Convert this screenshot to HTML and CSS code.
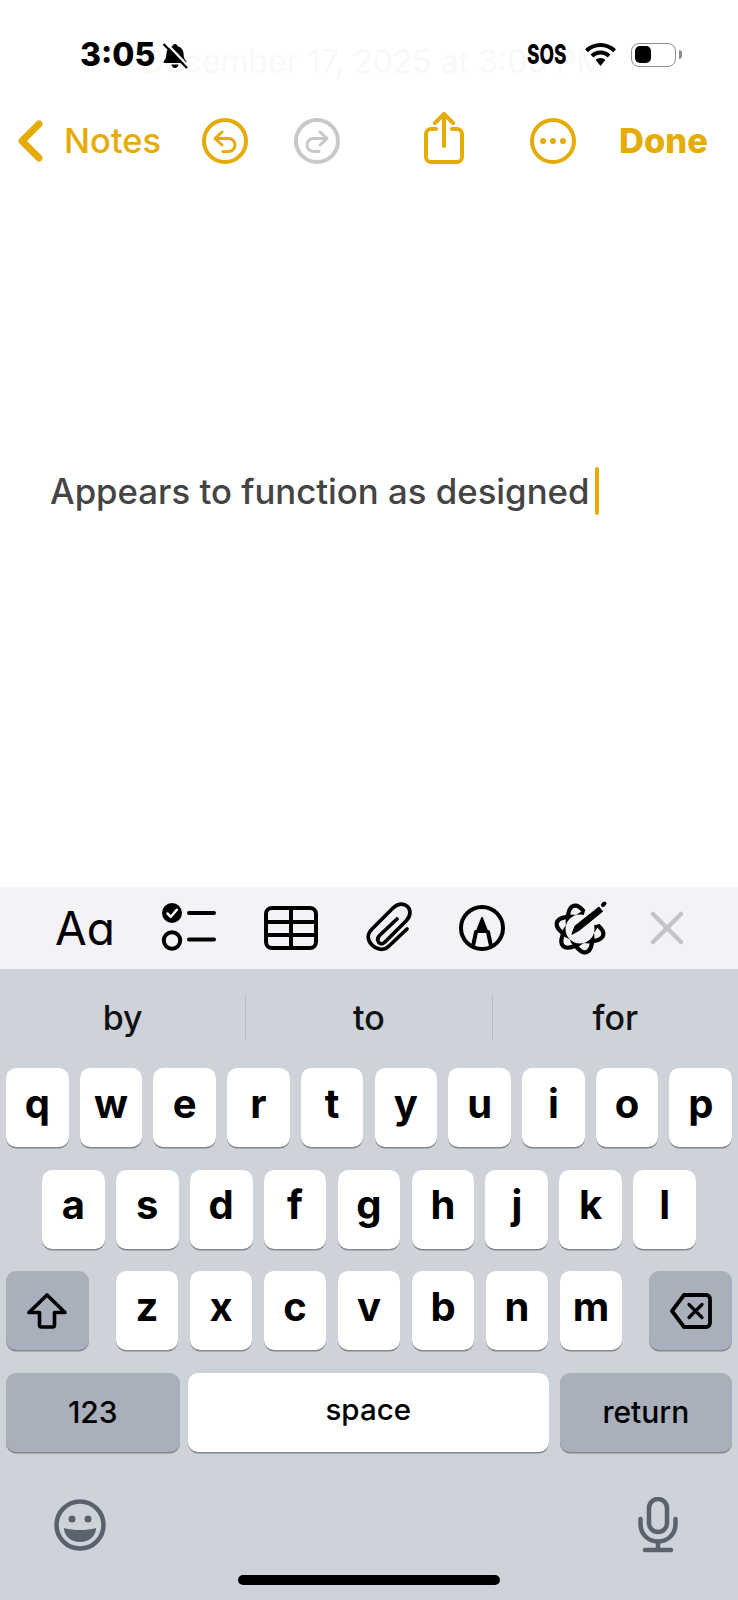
FILE: index.html
```html
<!DOCTYPE html>
<html lang="en">
<head>
<meta charset="utf-8">
<title>Notes</title>
<link rel="stylesheet" href="styles.css">
</head>
<body>
<div class="app">
  <div class="ghost">December 17, 2025 at 3:05 PM</div>
  <header class="status">
    <span class="time">3:05</span>
    <svg class="bell" viewBox="0 0 26 26"><path d="M13 1c1.500 0 2.500 1 2.600 2.200 3.800.9 6 4.100 6 7.900 0 3.600 1 5.300 2.600 6.900.7.700.2 1.900-.8 1.900H2.600c-1 0-1.500-1.200-.8-1.900C3.400 16.400 4.400 14.700 4.400 11.100c0-3.800 2.200-7 6-7.900C10.500 2 11.500 1 13 1zM9.500 21.500h7c-.2 2-1.700 3.500-3.500 3.500s-3.300-1.500-3.500-3.500z"/><path class="bell-gap" d="M4.500 0.500L27 24"/><path class="bell-slash" d="M1.500 1l23.500 24"/></svg>
    <span class="sos"><span class="sos-text">SOS</span></span>
    <svg class="wifi" viewBox="0 0 31 23"><path d="M15.500 0C9.500 0 4.200 2.300 0 6.200l2.800 3C6.200 6 10.600 4.100 15.500 4.100S24.800 6 28.200 9.200l2.800-3C26.800 2.300 21.500 0 15.500 0zM15.500 7.500c-3.900 0-7.300 1.500-10 4l2.900 3c1.900-1.800 4.400-2.900 7.100-2.900s5.200 1.100 7.100 2.900l2.900-3c-2.700-2.500-6.100-4-10-4zM15.500 15c-1.900 0-3.500.7-4.800 1.900l4.800 6 4.800-6c-1.300-1.200-2.900-1.900-4.800-1.900z"/></svg>
    <span class="battery"><span class="battery-level"></span></span>
    <span class="battery-nub"></span>
  </header>

  <nav class="nav">
    <svg class="chevron" viewBox="0 0 25 42"><path d="M21 4L4 21l17 17"/></svg>
    <span class="back">Notes</span>
    <svg class="round undo" viewBox="0 0 46 46"><circle cx="23" cy="23" r="21"/><path class="arrow" d="M20 14l-7 6.500 7 6.500M13 20.500h13.500a6.500 6.500 0 0 1 0 13H21"/></svg>
    <svg class="round redo" viewBox="0 0 46 46"><circle cx="23" cy="23" r="21"/><path class="arrow" d="M26 14l7 6.500-7 6.500M33 20.500H19.500a6.500 6.500 0 0 0 0 13H25"/></svg>
    <svg class="share" viewBox="0 0 40 52"><path d="M12 17H7a5 5 0 0 0-5 5v23a5 5 0 0 0 5 5h26a5 5 0 0 0 5-5V22a5 5 0 0 0-5-5h-5M20 34V3M11 11l9-9 9 9"/></svg>
    <svg class="round more" viewBox="0 0 46 46"><circle cx="23" cy="23" r="21"/><circle class="dot" cx="13" cy="23" r="3"/><circle class="dot" cx="23" cy="23" r="3"/><circle class="dot" cx="33" cy="23" r="3"/></svg>
    <span class="done">Done</span>
  </nav>

  <main class="note">
    <span class="note-text">Appears to function as designed</span><span class="caret"></span>
  </main>

  <div class="toolbar">
    <span class="aa">Aa</span>
    <svg class="tool checklist" viewBox="0 0 54 46"><circle class="solid" cx="11" cy="8" r="9"/><path class="tick" d="M6.500 8.500l3.300 3.300 6-7"/><circle cx="11" cy="35.500" r="8.200"/><path d="M28 8h25M28 34.500h25"/></svg>
    <svg class="tool table" viewBox="0 0 54 44"><rect x="2" y="2" width="50" height="40" rx="6"/><path d="M2 16h50M2 29h50M27 2v40"/></svg>
    <svg class="tool clip" viewBox="0 0 65 65"><path d="M52 33L34 50C29 55 22 54 17 49C12 44 12 38 17 33L38 12C43 7 49 7 52.500 10.500C56 14 56 20 51 25L30 46C27 49 24 48 23 45C22 43 23 41 25 39L42 23"/></svg>
    <svg class="tool markup" viewBox="0 0 46 46"><circle cx="23" cy="23" r="21"/><path class="solid" d="M23 13l5.500 14h-11z"/><path d="M17 27l-3 14M29 27l3 14"/></svg>
    <svg class="tool writing" viewBox="0 0 70 65">
      <ellipse cx="35" cy="33" rx="24" ry="11" transform="rotate(15 35 33)"/>
      <ellipse cx="35" cy="33" rx="24" ry="11" transform="rotate(75 35 33)"/>
      <ellipse cx="35" cy="33" rx="24" ry="11" transform="rotate(135 35 33)"/>
      <circle class="erase" cx="35" cy="33" r="14.500"/>
      <path class="erase" d="M35 33L70 24V0H44z"/>
      <path class="halo" d="M28 36L56 13"/>
      <path class="solid pen" d="M27 38l3-8 24-19 3.500 4.500-23.500 19z"/>
      <path class="tip" d="M58 9l1.500-1.500"/>
    </svg>
    <svg class="tool close" viewBox="0 0 36 36"><path d="M4 4l28 28M32 4L4 32"/></svg>
  </div>

  <section class="keyboard">
    <div class="suggestions">
      <span class="suggestion">by</span>
      <span class="suggestion">to</span>
      <span class="suggestion">for</span>
    </div>
    <div class="keys">
      <div class="row">
        <span class="key">q</span><span class="key">w</span><span class="key">e</span><span class="key">r</span><span class="key">t</span><span class="key">y</span><span class="key">u</span><span class="key">i</span><span class="key">o</span><span class="key">p</span>
      </div>
      <div class="row row-home">
        <span class="key">a</span><span class="key">s</span><span class="key">d</span><span class="key">f</span><span class="key">g</span><span class="key">h</span><span class="key">j</span><span class="key">k</span><span class="key">l</span>
      </div>
      <div class="row">
        <span class="key fn shift"><svg class="shift-icon" viewBox="0 0 40 36"><path d="M20 2L2 19.500h10.500V32a2 2 0 0 0 2 2h11a2 2 0 0 0 2-2V19.500H38z"/></svg></span>
        <span class="key">z</span><span class="key">x</span><span class="key">c</span><span class="key">v</span><span class="key">b</span><span class="key">n</span><span class="key">m</span>
        <span class="key fn del"><svg class="del-icon" viewBox="0 0 42 36"><path d="M14 2h22a4 4 0 0 1 4 4v24a4 4 0 0 1-4 4H14L2 18z"/><path class="del-x" d="M19 11.500l13 13M32 11.500l-13 13"/></svg></span>
      </div>
      <div class="row">
        <span class="key fn num">123</span>
        <span class="key word space">space</span>
        <span class="key fn word ret">return</span>
      </div>
    </div>
    <div class="bottom">
      <svg class="emoji" viewBox="0 0 52 52"><circle cx="26" cy="26" r="23.500"/><circle class="fill" cx="18" cy="20" r="3.500"/><circle class="fill" cx="34" cy="20" r="3.500"/><path class="fill" d="M10 29c5 1.500 10 2 16 2s11-.5 16-2c0 8-7 14-16 14s-16-6-16-14z"/></svg>
      <svg class="mic" viewBox="0 0 40 56"><rect x="11" y="2" width="18" height="33" rx="9"/><path d="M2.500 22v5c0 10 7.500 17.500 17.500 17.500S37.500 37 37.500 27v-5M20 44.500V53M7 53h26"/></svg>
    </div>
    <div class="home"><span class="home-bar"></span></div>
  </section>
</div>
</body>
</html>
```
FILE: styles.css
```css
* { box-sizing: border-box; }
html, body { margin: 0; height: 100%; background: #fff; }
body { font-family: Inter, "Liberation Sans", sans-serif; }
.app { position: relative; width: 738px; height: 1600px; display: flex; flex-direction: column; overflow: hidden; background: #fff; }

.ghost { position: absolute; top: 42px; left: 0; width: 738px; padding-left: 9px; text-align: center; font-size: 32px; color: #f8f8f8; white-space: nowrap; }

.status { position: relative; height: 91px; flex: none; display: flex; align-items: flex-start; padding: 43px 0 0 80px; }
.time { width: 82px; font-size: 32px; line-height: 24px; font-weight: 800; color: #000; }
.bell { width: 26px; height: 26px; }
.bell-gap { stroke: #fff; stroke-width: 2.400; fill: none; }
.bell-slash { stroke: #000; stroke-width: 2.200; fill: none; }
.sos { width: 41px; height: 22px; margin-left: 339px; margin-top: 1px; }
.sos-text { display: block; font-size: 27px; line-height: 22px; font-weight: 800; color: #000; transform: scaleX(.7); transform-origin: left center; }
.wifi { width: 31px; height: 23px; margin-left: 17px; }
.battery { width: 45px; height: 24px; margin-left: 15px; border: 1.500px solid #8c8c8c; border-radius: 8px; padding: 2px 3px; }
.battery-level { display: block; width: 16px; height: 17px; border-radius: 5px; background: #000; }
.battery-nub { width: 3px; height: 9px; margin: 7px 0 0 3px; background: #8c8c8c; border-radius: 0 3px 3px 0; }

.nav { height: 100px; flex: none; display: flex; align-items: center; padding-left: 18px; color: #e5ac07; }
.nav svg { fill: none; stroke: #e5ac07; }
.chevron { width: 25px; height: 42px; stroke-width: 7; stroke-linecap: round; stroke-linejoin: round; }
.back { margin-left: 21px; width: 96px; font-size: 34.500px; font-weight: 500; line-height: 40px; }
.round { width: 46px; height: 46px; stroke-width: 4; stroke-linecap: round; stroke-linejoin: round; }
.arrow { stroke-width: 3; }
.undo { margin-left: 42px; }
.redo { margin-left: 46px; }
.nav .redo { stroke: #c8c8c8; }
.share { width: 40px; height: 52px; margin-left: 84px; stroke-width: 4; stroke-linecap: round; stroke-linejoin: round; margin-top: -6px; }
.more { margin-left: 66px; }
.nav .dot { fill: #e5ac07; stroke: none; }
.done { margin-left: 43px; font-size: 34.500px; font-weight: 800; line-height: 40px; }

.note { flex: 1; display: flex; align-items: center; padding: 0 0 96px 50px; }
.note-text { font-size: 34.750px; font-weight: 550; color: #444; white-space: nowrap; }
.caret { width: 4px; height: 48px; margin-left: 6px; background: #e5ac07; border-radius: 2px; }

.toolbar { height: 82px; flex: none; display: flex; align-items: center; background: #f2f2f7; color: #000; padding-left: 55px; }
.aa { width: 57px; font-size: 46px; line-height: 50px; font-weight: 400; font-feature-settings: "cv11"; }
.tool { flex: none; overflow: visible; fill: none; stroke: #000; stroke-width: 4; stroke-linecap: round; stroke-linejoin: round; }
.tool .solid { fill: #000; stroke-width: 2; }
.tool .tick { stroke: #fff; stroke-width: 2.500; }
.checklist { width: 54px; height: 46px; margin-left: 49px; }
.table { width: 54px; height: 44px; margin-left: 49px; }
.clip { width: 65px; height: 65px; margin-left: 37px; stroke-width: 3.700; }
.markup { width: 46px; height: 46px; margin-left: 39px; }
.writing { width: 70px; height: 65px; margin-left: 40px; stroke-width: 4.200; }
.writing .erase { fill: #f2f2f7; stroke: none; }
.writing .halo { stroke: #f2f2f7; stroke-width: 11; }
.writing .pen { stroke-width: 1; }
.writing .tip { stroke-width: 4; }
.close { width: 36px; height: 36px; margin-left: 34px; stroke: #c4c4c6; stroke-width: 4.500; }

.keyboard { height: 631px; flex: none; background: #ced2d9; display: flex; flex-direction: column; color: #000; }
.suggestions { height: 99px; flex: none; display: flex; align-items: center; padding-bottom: 3px; }
.suggestion { flex: 1; height: 47px; font-size: 34px; line-height: 47px; font-weight: 550; text-align: center; color: #111; border-right: 1px solid #b8bcc4; }
.suggestion:last-child { border-right: 0; }
.keys { display: flex; flex-direction: column; gap: 22.500px; }
.row { display: flex; gap: 11.200px; padding: 0 6px; height: 79px; }
.row-home { padding: 0 42px; }
.key { flex: 1 1 0; min-width: 0; display: flex; align-items: center; justify-content: center; height: 79px; background: #fff; border-radius: 10px; box-shadow: 0 1.500px 0 #85878c; font-size: 40px; font-weight: 700; line-height: 1; padding-bottom: 8px; }
.fn { background: #a9afbb; padding-bottom: 0; }
.shift, .del { flex: none; width: 82.700px; }
.shift { margin-right: 15.800px; }
.del { margin-left: 15.800px; }
.shift-icon { width: 40px; height: 36px; fill: none; stroke: #000; stroke-width: 3.600; stroke-linejoin: round; }
.del-icon { width: 42px; height: 36px; fill: none; stroke: #000; stroke-width: 3.800; stroke-linejoin: round; stroke-linecap: round; }
.del-x { stroke-width: 3.200; }
.num { flex: none; width: 173.600px; margin-right: -2.800px; font-size: 30px; font-weight: 500; }
.space { flex: 1; padding-bottom: 4px; font-size: 29.500px; font-weight: 500; }
.ret { flex: none; width: 172.300px; font-size: 30px; font-weight: 500; }

.bottom { display: flex; justify-content: space-between; align-items: center; padding: 45px 60px 0 54px; }
.emoji { width: 52px; height: 52px; fill: none; stroke: #5b616d; stroke-width: 4.500; }
.emoji .fill { fill: #5b616d; stroke: none; }
.mic { width: 40px; height: 56px; fill: none; stroke: #5b616d; stroke-width: 4.500; stroke-linecap: round; }
.home { display: flex; justify-content: center; padding-top: 22.500px; }
.home-bar { width: 262px; height: 10px; border-radius: 5px; background: #000; }
```
